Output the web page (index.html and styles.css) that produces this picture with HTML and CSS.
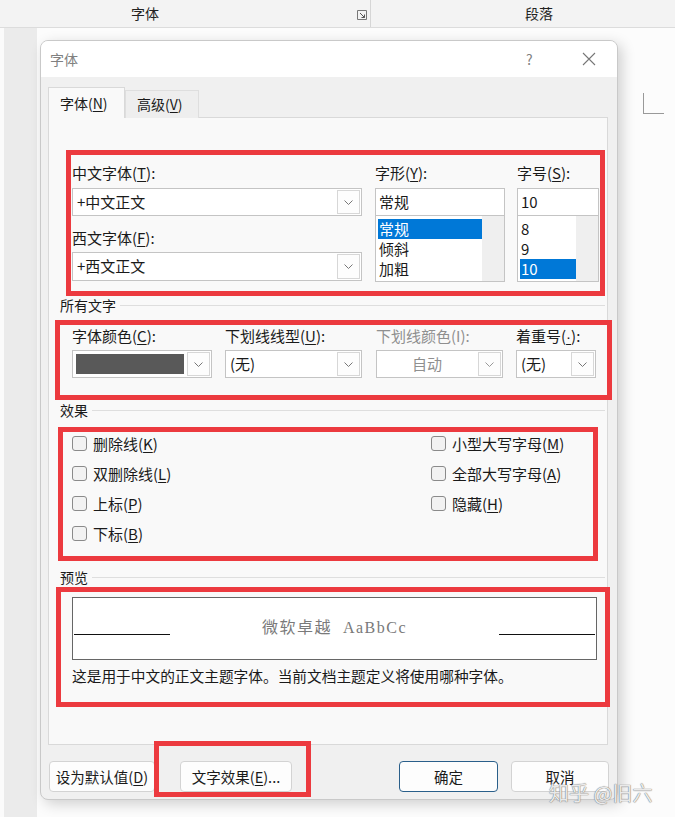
FILE: index.html
```html
<!DOCTYPE html>
<html lang="zh-CN">
<head>
    <meta charset="UTF-8">
    <title>字体</title>
    <link rel="stylesheet" href="styles.css">
</head>
<body>
    <!-- Wstążka -->
    <div class="ribbon">
        <div class="group group-font">
            <span class="group-label">字体</span>
            <svg class="launcher" width="10" height="10" viewBox="0 0 10 10">
                <path d="M0.5 0.5 H9.5 V9.5 H0.5 Z" fill="none" stroke="#777" stroke-width="1"/>
                <path d="M3 3 L7.5 7.5 M4.5 7.5 H7.5 V4.5" fill="none" stroke="#555" stroke-width="1"/>
            </svg>
        </div>
        <div class="group group-para">
            <span class="group-label">段落</span>
        </div>
    </div>

    <div class="workspace">
        <div class="side"></div>
        <div class="page">
            <span class="corner"></span>
        </div>
    </div>

    <!-- Okno dialogowe -->
    <div class="dialog">
        <div class="titlebar">
            <span class="title">字体</span>
            <span class="help">?</span>
            <span class="close">
                <svg width="14" height="14" viewBox="0 0 14 14"><path d="M1 1 L13 13 M13 1 L1 13" stroke="#777" stroke-width="1.1"/></svg>
            </span>
        </div>

        <div class="tabs">
            <span class="tab active">字体(<u>N</u>)</span>
            <span class="tab">高级(<u>V</u>)</span>
        </div>

        <div class="panel">
            <div class="font-row">
                <div class="col">
                    <label>中文字体(<u>T</u>):</label>
                    <div class="select"><span class="val">+中文正文</span><span class="arrow"><svg width="9" height="5" viewBox="0 0 9 5"><path d="M0.5 0.5 L4.5 4.5 L8.5 0.5" fill="none" stroke="#777"/></svg></span></div>
                    <label class="second">西文字体(<u>F</u>):</label>
                    <div class="select tall"><span class="val">+西文正文</span><span class="arrow"><svg width="9" height="5" viewBox="0 0 9 5"><path d="M0.5 0.5 L4.5 4.5 L8.5 0.5" fill="none" stroke="#777"/></svg></span></div>
                </div>
                <div class="col">
                    <label>字形(<u>Y</u>):</label>
                    <div class="input">常规</div>
                    <div class="list">
                        <div class="items">
                            <span class="item selected">常规</span>
                            <span class="item">倾斜</span>
                            <span class="item">加粗</span>
                        </div>
                        <span class="scroll"></span>
                    </div>
                </div>
                <div class="col">
                    <label>字号(<u>S</u>):</label>
                    <div class="input">10</div>
                    <div class="list">
                        <div class="items">
                            <span class="item">8</span>
                            <span class="item">9</span>
                            <span class="item selected">10</span>
                        </div>
                        <span class="scroll"></span>
                    </div>
                </div>
            </div>

            <div class="section-title"><span>所有文字</span></div>

            <div class="text-row">
                <div class="col">
                    <label>字体颜色(<u>C</u>):</label>
                    <div class="select"><span class="swatch"></span><span class="arrow"><svg width="9" height="5" viewBox="0 0 9 5"><path d="M0.5 0.5 L4.5 4.5 L8.5 0.5" fill="none" stroke="#777"/></svg></span></div>
                </div>
                <div class="col">
                    <label>下划线线型(<u>U</u>):</label>
                    <div class="select"><span class="val">(无)</span><span class="arrow"><svg width="9" height="5" viewBox="0 0 9 5"><path d="M0.5 0.5 L4.5 4.5 L8.5 0.5" fill="none" stroke="#777"/></svg></span></div>
                </div>
                <div class="col disabled">
                    <label>下划线颜色(I):</label>
                    <div class="select"><span class="val center">自动</span><span class="arrow"><svg width="9" height="5" viewBox="0 0 9 5"><path d="M0.5 0.5 L4.5 4.5 L8.5 0.5" fill="none" stroke="#999"/></svg></span></div>
                </div>
                <div class="col">
                    <label>着重号(<u class="dot">·</u>):</label>
                    <div class="select"><span class="val">(无)</span><span class="arrow"><svg width="9" height="5" viewBox="0 0 9 5"><path d="M0.5 0.5 L4.5 4.5 L8.5 0.5" fill="none" stroke="#777"/></svg></span></div>
                </div>
            </div>

            <div class="section-title effects-title"><span>效果</span></div>

            <div class="effects">
                <div class="checks">
                    <span class="check"><i></i>删除线(<u>K</u>)</span>
                    <span class="check"><i></i>双删除线(<u>L</u>)</span>
                    <span class="check"><i></i>上标(<u>P</u>)</span>
                    <span class="check"><i></i>下标(<u>B</u>)</span>
                </div>
                <div class="checks">
                    <span class="check"><i></i>小型大写字母(<u>M</u>)</span>
                    <span class="check"><i></i>全部大写字母(<u>A</u>)</span>
                    <span class="check"><i></i>隐藏(<u>H</u>)</span>
                </div>
            </div>

            <div class="section-title preview-title"><span>预览</span></div>

            <div class="preview">
                <span class="rule"></span>
                <span class="sample">微软卓越&nbsp;&nbsp;AaBbCc</span>
                <span class="rule"></span>
            </div>
            <p class="note">这是用于中文的正文主题字体。当前文档主题定义将使用哪种字体。</p>
        </div>

        <div class="buttons">
            <button class="btn btn-default">设为默认值(<u>D</u>)</button>
            <button class="btn btn-effects">文字效果(<u>E</u>)...</button>
            <span class="spacer"></span>
            <button class="btn btn-ok">确定</button>
            <button class="btn btn-cancel">取消</button>
        </div>
    </div>

    <!-- Czerwone ramki (adnotacje) -->
    <span class="mark mark-1"></span>
    <span class="mark mark-2"></span>
    <span class="mark mark-3"></span>
    <span class="mark mark-4"></span>
    <span class="mark mark-5"></span>

    <span class="watermark">知乎 @旧六</span>
</body>
</html>
```

FILE: styles.css
```css
body {
    margin: 0;
    width: 675px;
    height: 817px;
    overflow: hidden;
    position: relative;
    background: #fbfbfb;
    font-family: "Noto Sans CJK SC", "Noto Sans", sans-serif;
    font-size: 14px;
    color: #1a1a1a;
}
u {
    text-decoration: underline;
    text-underline-offset: 2px;
}
u.dot {
    font-family: "Liberation Sans", sans-serif;
}
.ribbon {
    height: 27px;
    display: flex;
    background: #f3f3f3;
    border-bottom: 1px solid #dcdcdc;
}
.group {
    position: relative;
    height: 27px;
    line-height: 27px;
    font-size: 14px;
    color: #222;
}
.group-font {
    width: 371px;
    border-right: 1px solid #d6d6d6;
    box-sizing: border-box;
}
.group-font .group-label {
    padding-left: 131px;
}
.launcher {
    position: absolute;
    left: 357px;
    top: 10px;
}
.group-para .group-label {
    padding-left: 154px;
}
.workspace {
    display: flex;
    height: 789px;
}
.side {
    width: 33px;
    margin-left: 4px;
    background: #ebebeb;
}
.page {
    flex: 1;
    position: relative;
    background: #fcfcfc;
}
.corner {
    position: absolute;
    left: 606px;
    top: 65px;
    width: 20px;
    height: 20px;
    border-left: 1px solid #999;
    border-bottom: 1px solid #999;
}
.dialog {
    position: absolute;
    left: 40px;
    top: 40px;
    width: 578px;
    height: 760px;
    box-sizing: border-box;
    border: 1px solid #c9c9c9;
    border-radius: 8px;
    background: #f0f0f0;
    box-shadow: 4px 4px 14px rgba(0, 0, 0, 0.18);
    overflow: hidden;
}
.titlebar {
    height: 36px;
    background: #fff;
    display: flex;
    align-items: center;
    color: #808080;
}
.title {
    padding-left: 9px;
    flex: 1;
}
.help {
    width: 12px;
    margin-right: 44px;
    font-size: 14px;
}
.close {
    width: 14px;
    height: 14px;
    margin-right: 21px;
    display: flex;
}
.tabs {
    display: flex;
    align-items: flex-end;
    margin: 11px 0 0 7px;
    height: 30px;
    position: relative;
    z-index: 1;
}
.tab {
    height: 27px;
    line-height: 27px;
    padding: 0 11px;
    width: 50px;
    background: #eeeeee;
    border: 1px solid #dedede;
    border-bottom: none;
    font-size: 14px;
}
.tab.active {
    width: 53px;
    height: 30px;
    line-height: 30px;
    background: #f9f9f9;
    border-color: #d9d9d9;
}
.panel {
    margin: -1px 0 0 7px;
    width: 560px;
    height: 628px;
    box-sizing: border-box;
    border: 1px solid #d9d9d9;
    background: #f9f9f9;
    padding: 45px 0 0 11px;
    font-size: 15px;
}
label {
    display: block;
    height: 20px;
    line-height: 20px;
    white-space: nowrap;
}
.font-row {
    display: grid;
    grid-template-columns: 290px 130px 81px;
    column-gap: 13px;
    margin-left: 12px;
}
.font-row .col:nth-child(3) {
    margin-left: -1px;
}
.font-row label {
    margin-bottom: 5px;
}
.font-row label.second {
    margin: 12px 0 4px;
}
.select {
    display: flex;
    height: 28px;
    box-sizing: border-box;
    border: 1px solid #c4c4c4;
    background: #fff;
    align-items: stretch;
}
.select.tall {
    height: 29px;
}
.select .val {
    flex: 1;
    padding-left: 4px;
    line-height: 26px;
}
.select .val.center {
    text-align: center;
    padding-left: 0;
}
.select .arrow {
    width: 21px;
    margin: 1px;
    border: 1px solid #d7d7d7;
    background: #fdfdfd;
    display: flex;
    align-items: center;
    justify-content: center;
}
.swatch {
    flex: 1;
    margin: 3px 2px 3px 3px;
    background: #595959;
}
.input {
    height: 28px;
    line-height: 26px;
    box-sizing: border-box;
    border: 1px solid #c4c4c4;
    background: #fff;
    padding-left: 3px;
}
.list {
    display: flex;
    height: 66px;
    box-sizing: border-box;
    border: 1px solid #c4c4c4;
    border-top: none;
    background: #fff;
}
.items {
    flex: 1;
    display: flex;
    flex-direction: column;
    padding: 3px 0 0 2px;
}
.item {
    height: 20px;
    line-height: 20px;
    padding-left: 1px;
}
.item.selected {
    background: #0078d7;
    color: #fff;
}
.scroll {
    width: 22px;
    background: #efefef;
}
.section-title {
    display: flex;
    align-items: center;
    height: 18px;
    line-height: 18px;
    margin-top: 14px;
    width: 545px;
    font-size: 14px;
}
.section-title span {
    padding-right: 4px;
}
.section-title::after {
    content: "";
    flex: 1;
    border-top: 1px solid #dedede;
}
.text-row {
    display: grid;
    grid-template-columns: 140px 137px 128px 80px;
    column-gap: 13px;
    margin: 12px 0 0 12px;
}
.text-row .col:nth-child(3) {
    margin-left: 1px;
}
.text-row label {
    margin-bottom: 4px;
}
.disabled label,
.disabled .val {
    color: #8f8f8f;
}
.effects-title {
    margin-top: 23px;
}
.effects {
    display: grid;
    grid-template-columns: 359px 1fr;
    margin: 14px 0 0 12px;
}
.checks {
    display: flex;
    flex-direction: column;
    gap: 10px;
}
.check {
    display: flex;
    align-items: center;
    height: 20px;
    white-space: nowrap;
}
.check i {
    width: 13px;
    height: 13px;
    border: 1px solid #8a8a8a;
    border-radius: 3px;
    background: #f2f2f2;
    margin-right: 6px;
}
.preview-title {
    margin-top: 25px;
}
.preview {
    margin: 11px 0 0 12px;
    width: 525px;
    height: 63px;
    box-sizing: border-box;
    border: 1px solid #666;
    background: #fff;
    display: flex;
    align-items: center;
    padding: 0 1px;
}
.rule {
    width: 96px;
    align-self: flex-start;
    margin-top: 36px;
    border-top: 1.5px solid #111;
}
.sample {
    flex: 1;
    text-align: center;
    font-family: "Liberation Serif", "Noto Sans CJK SC", serif;
    font-size: 16px;
    letter-spacing: 1.5px;
    color: #7a7a7a;
    margin-top: -6px;
}
.note {
    margin: 6px 0 0 12px;
    height: 20px;
    line-height: 20px;
    font-size: 14.7px;
    white-space: nowrap;
}
.buttons {
    display: flex;
    margin: 16px 0 0 8px;
    width: 560px;
}
.btn {
    height: 31px;
    box-sizing: border-box;
    border: 1px solid #d3d3d3;
    border-radius: 4px;
    background: #fdfdfd;
    font-family: "Noto Sans CJK SC", "Noto Sans", sans-serif;
    font-size: 14.5px;
    color: #1a1a1a;
    padding: 0;
}
.btn-default {
    width: 106px;
}
.btn-effects {
    width: 112px;
    margin-left: 25px;
}
.spacer {
    flex: 1;
}
.btn-ok {
    width: 99px;
    border: 1px solid #2a5f8a;
}
.btn-cancel {
    width: 98px;
    margin-left: 13px;
}
.mark {
    position: absolute;
    box-sizing: border-box;
    border: 5px solid #ec3a3f;
    z-index: 5;
}
.mark-1 {
    left: 66px;
    top: 150px;
    width: 539px;
    height: 146px;
}
.mark-2 {
    left: 55px;
    top: 320px;
    width: 557px;
    height: 80px;
}
.mark-3 {
    left: 58px;
    top: 427px;
    width: 540px;
    height: 134px;
}
.mark-4 {
    left: 56px;
    top: 587px;
    width: 554px;
    height: 120px;
}
.mark-5 {
    left: 154px;
    top: 741px;
    width: 157px;
    height: 56px;
}
.watermark {
    position: absolute;
    left: 549px;
    top: 778px;
    z-index: 6;
    font-size: 20px;
    color: rgba(255, 255, 255, 0.85);
    text-shadow: 0 0 1px #777, 0 0 1px #777;
    white-space: nowrap;
}
```
